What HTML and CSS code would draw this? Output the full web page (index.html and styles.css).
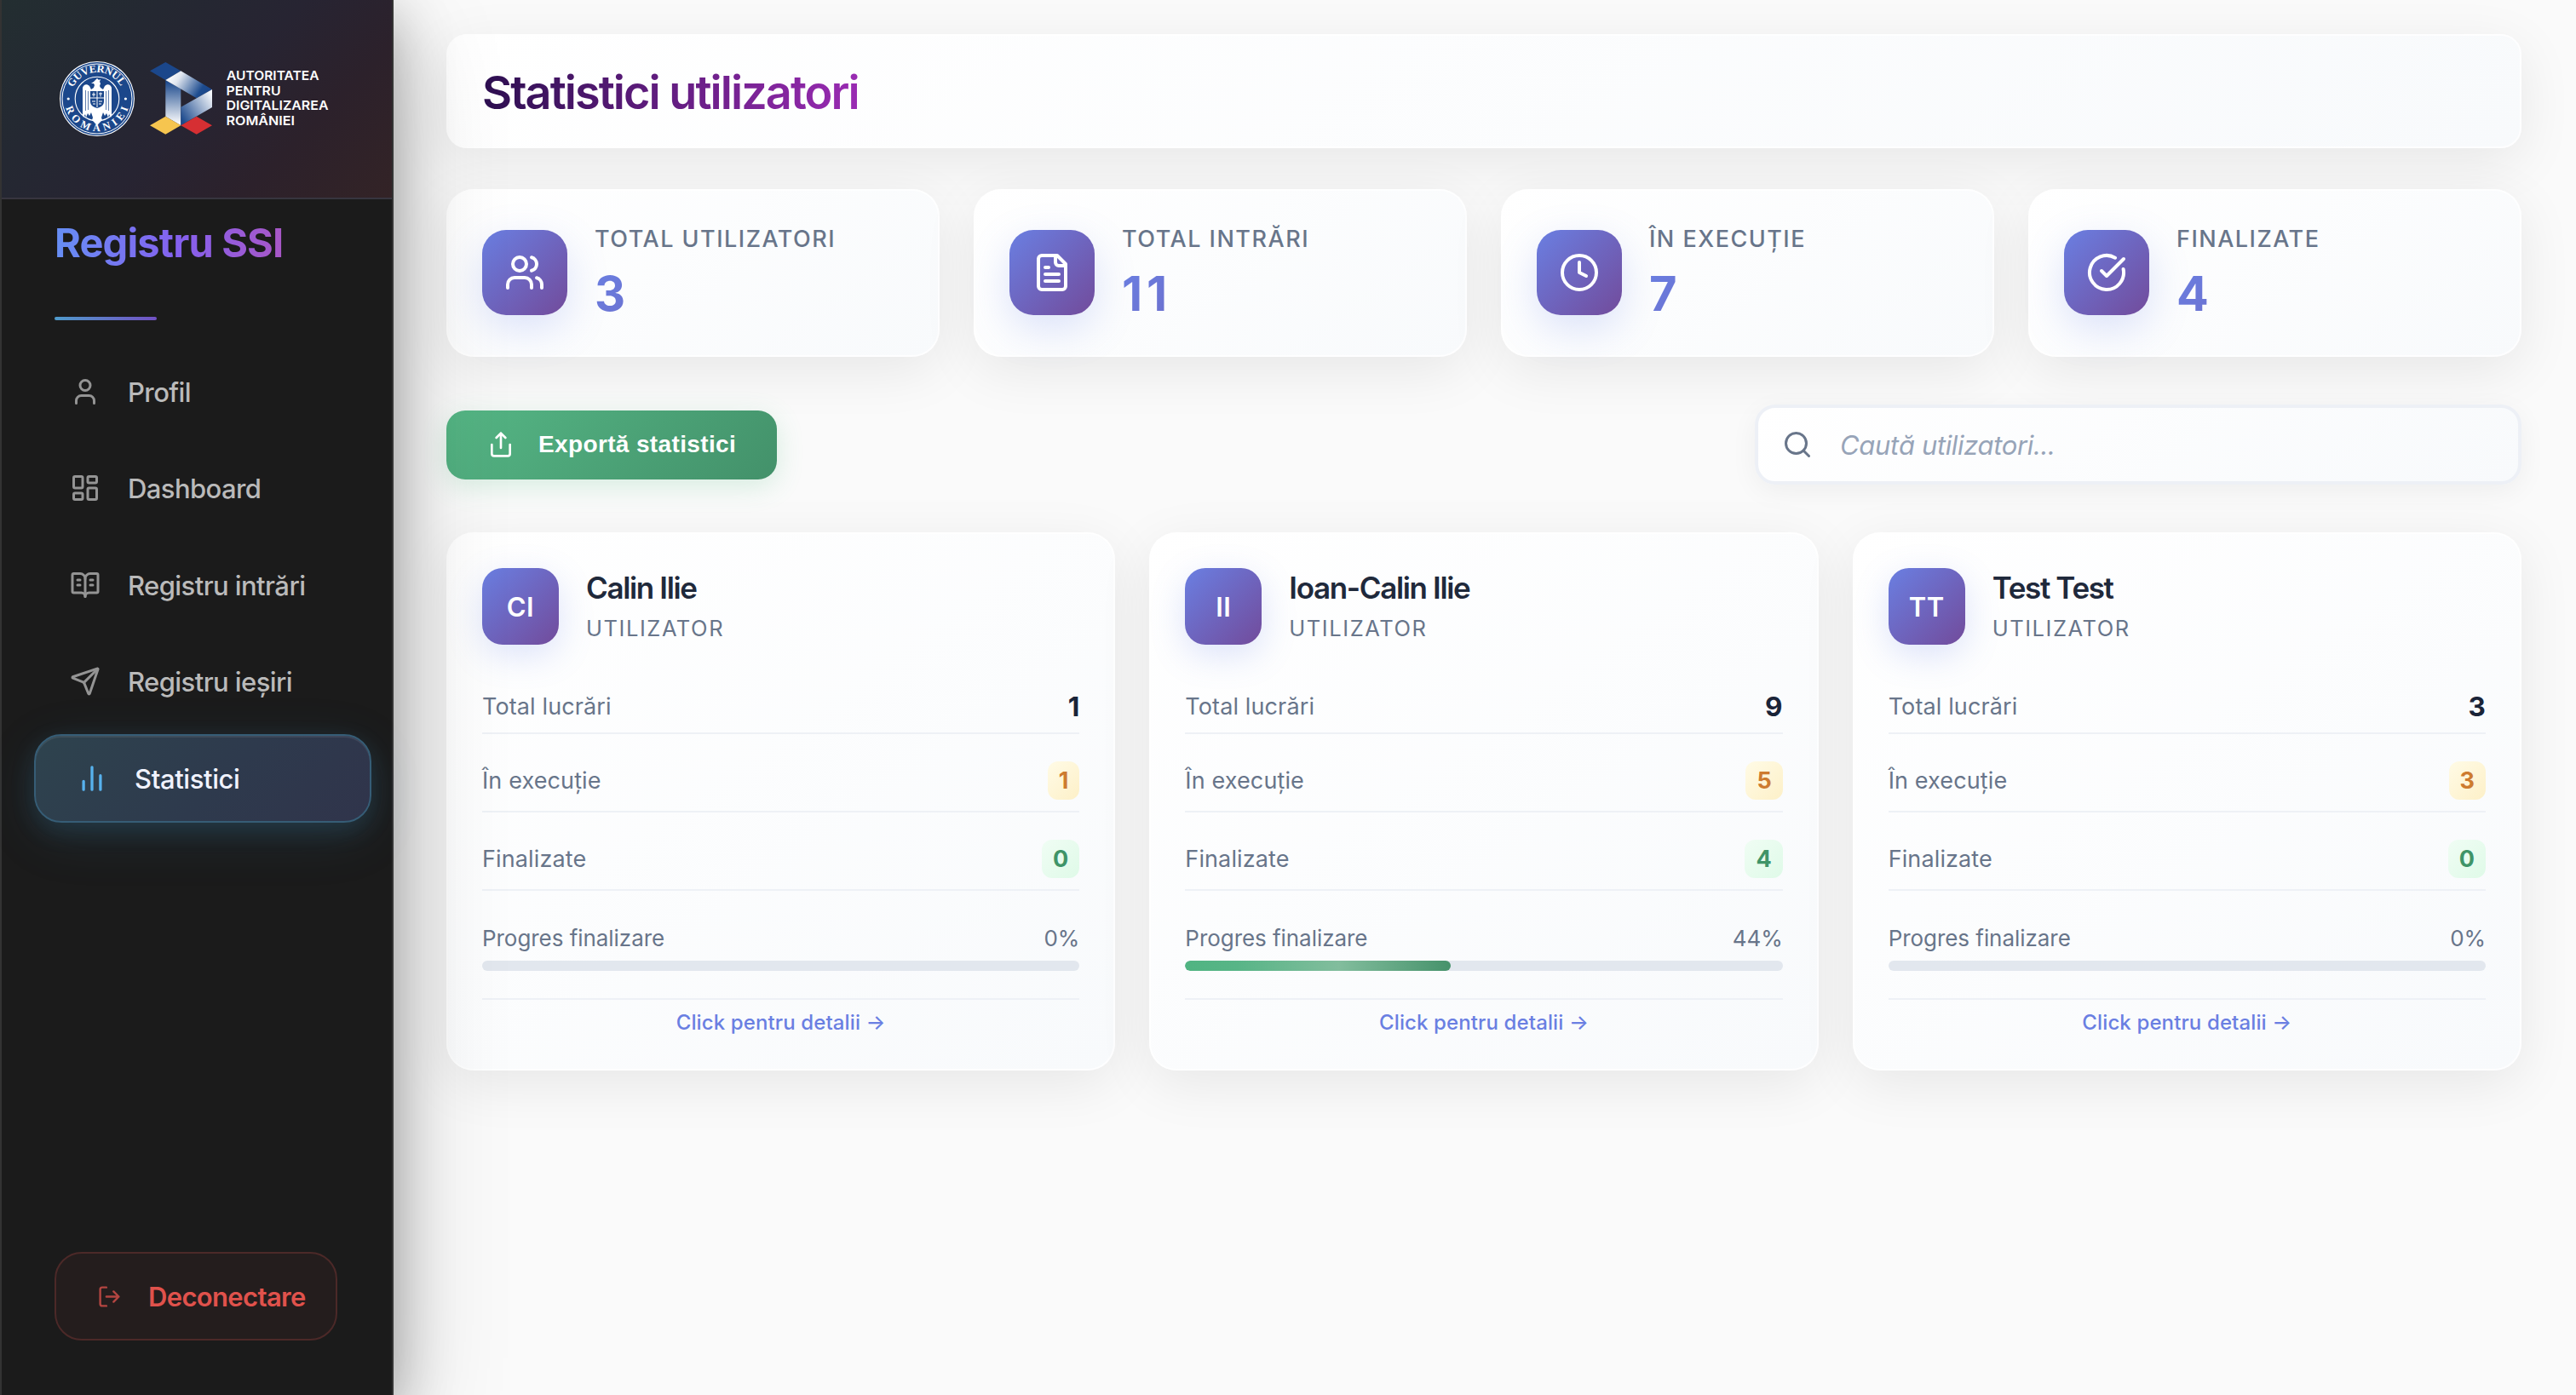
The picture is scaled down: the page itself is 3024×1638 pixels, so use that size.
FILE: index.html
```html
<!DOCTYPE html>
<html lang="ro">
<head>
<meta charset="utf-8">
<title>Statistici utilizatori</title>
<link rel="stylesheet" href="styles.css">
</head>
<body>
<div class="app">
  <aside class="sidebar">
    <div class="brand">
      <svg class="brand-logo" viewBox="64 60 336 112" width="336" height="112">
        <defs>
          <linearGradient id="bandTop" x1="200" y1="86" x2="240" y2="112" gradientUnits="userSpaceOnUse"><stop offset="0" stop-color="#fff"/><stop offset=".25" stop-color="#dfe5ef"/><stop offset=".85" stop-color="#1d4c8f"/><stop offset="1" stop-color="#1b478b"/></linearGradient>
          <linearGradient id="bandLeft" x1="0" y1="96" x2="0" y2="146" gradientUnits="userSpaceOnUse"><stop offset="0" stop-color="#1d4a8d"/><stop offset="1" stop-color="#fff"/></linearGradient>
          <linearGradient id="bandRight" x1="212" y1="138" x2="250" y2="114" gradientUnits="userSpaceOnUse"><stop offset="0" stop-color="#1d4a8d"/><stop offset="1" stop-color="#f4f7fb"/></linearGradient>
          <path id="arcTop" d="M 85.6 103 A 31.3 31.3 0 0 1 142.4 103"/>
          <path id="arcBottom" d="M 77.2 126.5 A 38.3 38.3 0 0 0 150.8 126.5"/>
        </defs>
        <circle cx="114" cy="116" r="44" fill="#fff"/>
        <circle cx="114" cy="116" r="42.9" fill="#1b478b"/>
        <circle cx="114" cy="116" r="41" fill="none" stroke="#fff" stroke-width="1"/>
        <circle cx="114" cy="116" r="25.8" fill="none" stroke="#fff" stroke-width="1.1"/>
        <text class="seal-text"><textPath href="#arcTop" textLength="69">GUVERNUL</textPath></text>
        <text class="seal-text"><textPath href="#arcBottom" textLength="98">ROMÂNIEI</textPath></text>
        <circle cx="80.2" cy="116" r="1.6" fill="#fff"/>
        <circle cx="147.4" cy="116" r="1.6" fill="#fff"/>
        <path fill="#fff" d="M112 94l2-2 2 2 2-1-1 3 1 2-1 3 1 2 3 2 2-4c3-3 7-2 8 2v32l-1 3-2-4-1 4-2-5-2 3-2-4-2 6 1 3-6 6-6-6 1-3-2-6-2 4-2-3-2 5-1-4-2 4-1-3v-32c1-4 5-5 8-2l2 4 3-2 1-3-1-2-3 0 3-2z"/>
        <path fill="#1b478b" d="M106 107h16v12c0 5-4 7-8 8-4-1-8-3-8-8z"/>
        <path stroke="#fff" stroke-width="1" fill="none" d="M114 107v19M106 115h16M108 111h4M110 108.500v5M116 110h4M118 108.500v5M108 119h4M116 119h4M109 122h3M116 122h3"/>
        <path stroke="#1b478b" stroke-width=".7" fill="none" d="M100.500 106v24M103.500 107v22M124.500 107v22M127.500 106v24"/>
        <polygon fill="#1b478b" points="176,83.300 194.300,73 212.300,83.300 194.300,94"/>
        <polygon fill="url(#bandLeft)" points="194.300,94 212.300,104.300 212.300,147.300 194.300,136.700"/>
        <polygon fill="url(#bandTop)" points="194.300,94 212.300,83.300 249,105 230.700,115.300"/>
        <polygon fill="url(#bandRight)" points="249,105 249,126 212.300,147.300 212.300,125.700"/>
        <polygon fill="#f6c54f" points="176,147.300 194.300,136.700 212.300,147.300 194.300,157.700"/>
        <polygon fill="#d62f33" points="212.300,147.300 230.700,136.700 249,147.300 230.700,157.700"/>
        <text class="brand-text" x="266" y="94.200" textLength="108.500" lengthAdjust="spacingAndGlyphs">AUTORITATEA</text>
        <text class="brand-text" x="265.500" y="111.700" textLength="64" lengthAdjust="spacingAndGlyphs">PENTRU</text>
        <text class="brand-text" x="265.500" y="129.400" textLength="120" lengthAdjust="spacingAndGlyphs">DIGITALIZAREA</text>
        <text class="brand-text" x="265.500" y="147" textLength="80.500" lengthAdjust="spacingAndGlyphs">ROMÂNIEI</text>
      </svg>
    </div>
    <h2 class="app-name">Registru SSI</h2>
    <div class="app-rule"></div>
    <nav class="nav">
      <a class="nav-item"><svg class="icon" viewBox="0 0 24 24"><path d="M19 21v-2a4 4 0 0 0-4-4H9a4 4 0 0 0-4 4v2"/><circle cx="12" cy="7" r="4"/></svg><span>Profil</span></a>
      <a class="nav-item"><svg class="icon" viewBox="0 0 24 24"><rect x="3" y="3" width="7" height="9" rx="1"/><rect x="14" y="3" width="7" height="5" rx="1"/><rect x="14" y="12" width="7" height="9" rx="1"/><rect x="3" y="16" width="7" height="5" rx="1"/></svg><span>Dashboard</span></a>
      <a class="nav-item"><svg class="icon" viewBox="0 0 24 24"><path d="M12 7v14M16 12h2M16 8h2M6 12h2M6 8h2"/><path d="M3 18a1 1 0 0 1-1-1V4a1 1 0 0 1 1-1h5a4 4 0 0 1 4 4 4 4 0 0 1 4-4h5a1 1 0 0 1 1 1v13a1 1 0 0 1-1 1h-6a3 3 0 0 0-3 3 3 3 0 0 0-3-3z"/></svg><span>Registru intrări</span></a>
      <a class="nav-item"><svg class="icon" viewBox="0 0 24 24"><path d="M14.536 21.686a.5.5 0 0 0 .937-.024l6.500-19a.496.496 0 0 0-.635-.635l-19 6.500a.5.5 0 0 0-.024.937l7.930 3.180a2 2 0 0 1 1.112 1.110z"/><path d="m21.854 2.147-10.940 10.939"/></svg><span>Registru ieșiri</span></a>
      <a class="nav-item active"><svg class="icon" viewBox="0 0 24 24"><path d="M18 20V10M12 20V4M6 20v-6"/></svg><span>Statistici</span></a>
    </nav>
    <button class="logout"><svg class="icon" viewBox="0 0 24 24"><path d="M9 21H5a2 2 0 0 1-2-2V5a2 2 0 0 1 2-2h4M16 17l5-5-5-5M21 12H9"/></svg><span>Deconectare</span></button>
  </aside>

  <main class="main">
    <header class="card page-head"><h1>Statistici utilizatori</h1></header>

    <section class="stats">
      <div class="card stat">
        <div class="stat-icon"><svg class="icon" viewBox="0 0 24 24"><path d="M16 21v-2a4 4 0 0 0-4-4H6a4 4 0 0 0-4 4v2"/><circle cx="9" cy="7" r="4"/><path d="M22 21v-2a4 4 0 0 0-3-3.870M16 3.130a4 4 0 0 1 0 7.750"/></svg></div>
        <div class="stat-body"><div class="stat-label">TOTAL UTILIZATORI</div><div class="stat-value">3</div></div>
      </div>
      <div class="card stat">
        <div class="stat-icon"><svg class="icon" viewBox="0 0 24 24"><path d="M15 2H6a2 2 0 0 0-2 2v16a2 2 0 0 0 2 2h12a2 2 0 0 0 2-2V7z"/><path d="M14 2v4a2 2 0 0 0 2 2h4M10 9H8M16 13H8M16 17H8"/></svg></div>
        <div class="stat-body"><div class="stat-label">TOTAL INTRĂRI</div><div class="stat-value eleven">11</div></div>
      </div>
      <div class="card stat">
        <div class="stat-icon"><svg class="icon" viewBox="0 0 24 24"><circle cx="12" cy="12" r="10"/><path d="M12 6v6l4 2"/></svg></div>
        <div class="stat-body"><div class="stat-label">ÎN EXECUȚIE</div><div class="stat-value">7</div></div>
      </div>
      <div class="card stat">
        <div class="stat-icon"><svg class="icon" viewBox="0 0 24 24"><path d="M21.801 10A10 10 0 1 1 17 3.335"/><path d="m9 11 3 3L22 4"/></svg></div>
        <div class="stat-body"><div class="stat-label">FINALIZATE</div><div class="stat-value">4</div></div>
      </div>
    </section>

    <section class="toolbar">
      <button class="export"><svg class="icon" viewBox="0 0 24 24"><path d="M4 12v8a2 2 0 0 0 2 2h12a2 2 0 0 0 2-2v-8M16 6l-4-4-4 4M12 2v13"/></svg><span>Exportă statistici</span></button>
      <label class="search"><svg class="icon" viewBox="0 0 24 24"><circle cx="11" cy="11" r="8"/><path d="m21 21-4.350-4.350"/></svg><input type="text" placeholder="Caută utilizatori..."></label>
    </section>

    <section class="users">
      <article class="card user">
        <div class="user-head"><div class="avatar">CI</div><div><div class="user-name">Calin Ilie</div><div class="user-role">UTILIZATOR</div></div></div>
        <div class="row first"><span>Total lucrări</span><strong>1</strong></div>
        <div class="row"><span>În execuție</span><b class="badge busy">1</b></div>
        <div class="row"><span>Finalizate</span><b class="badge done">0</b></div>
        <div class="progress-label"><span>Progres finalizare</span><span>0%</span></div>
        <div class="bar"><div class="fill" style="width:0%"></div></div>
        <div class="more">Click pentru detalii →</div>
      </article>
      <article class="card user">
        <div class="user-head"><div class="avatar">II</div><div><div class="user-name">Ioan-Calin Ilie</div><div class="user-role">UTILIZATOR</div></div></div>
        <div class="row first"><span>Total lucrări</span><strong>9</strong></div>
        <div class="row"><span>În execuție</span><b class="badge busy">5</b></div>
        <div class="row"><span>Finalizate</span><b class="badge done">4</b></div>
        <div class="progress-label"><span>Progres finalizare</span><span>44%</span></div>
        <div class="bar"><div class="fill" style="width:44.44%"></div></div>
        <div class="more">Click pentru detalii →</div>
      </article>
      <article class="card user">
        <div class="user-head"><div class="avatar">TT</div><div><div class="user-name">Test Test</div><div class="user-role">UTILIZATOR</div></div></div>
        <div class="row first"><span>Total lucrări</span><strong>3</strong></div>
        <div class="row"><span>În execuție</span><b class="badge busy">3</b></div>
        <div class="row"><span>Finalizate</span><b class="badge done">0</b></div>
        <div class="progress-label"><span>Progres finalizare</span><span>0%</span></div>
        <div class="bar"><div class="fill" style="width:0%"></div></div>
        <div class="more">Click pentru detalii →</div>
      </article>
    </section>
  </main>
</div>
</body>
</html>
```
FILE: styles.css
```css
* { box-sizing: border-box; }
body { margin: 0; background: #fafafa; font-family: Inter, "Noto Sans", sans-serif; color: #1e293b; }
h1, h2 { margin: 0; }
button { font: inherit; cursor: pointer; }
.icon { fill: none; stroke: currentColor; stroke-width: 2; stroke-linecap: round; stroke-linejoin: round; flex: none; display: block; }
.app { display: flex; height: 1638px; overflow: hidden; }

/* Sidebar */
.sidebar {
  width: 462px; flex: none; display: flex; flex-direction: column; position: relative; z-index: 2;
  background: #1b1b1b; border-left: 2px solid #333; border-right: 2px solid #333;
  box-shadow: 0 40px 128px rgba(0,0,0,.2), 0 20px 64px rgba(0,0,0,.3);
}
.brand {
  height: 234px; flex: none; padding: 60px 0 0 62px; border-bottom: 2px solid #37353f;
  background: linear-gradient(135deg, #232e31 0%, #242832 28%, #272432 52%, #2c212b 74%, #332326 100%);
}
.brand-logo { display: block; }
.seal-text { font: 600 12.5px "Liberation Serif", serif; fill: #fff; }
.brand-text { font: 600 15.2px Inter, sans-serif; fill: #fff; }
.app-name {
  align-self: flex-start; margin: 21px 0 0 62px; font-size: 47px; line-height: 60px; font-weight: 700; letter-spacing: -.85px;
  background: linear-gradient(90deg, #668ff5 0%, #8560ee 55%, #a857c6 100%);
  -webkit-background-clip: text; background-clip: text; color: transparent;
}
.app-rule { width: 120px; height: 4px; margin: 57px 0 32px 62px; border-radius: 2px; background: linear-gradient(90deg, #4f9bcb, #7251c4); flex: none; }
.nav { display: flex; flex-direction: column; gap: 9.4px; }
.nav-item { height: 104px; margin: 0 24px 0 38px; padding-left: 42px; display: flex; align-items: center; gap: 32px; font-size: 31px; font-weight: 500; letter-spacing: -.58px; color: #bababa; }
.nav-item .icon { width: 36px; height: 36px; color: #949494; }
.nav-item span { padding-top: 1px; }
.nav-item.active {
  padding-left: 48px; border: 2px solid #365d76; border-radius: 32px; color: #f1f3ff; letter-spacing: -.4px;
  background: linear-gradient(135deg, #2e434e, #2e3a4d 55%, #30344b);
  box-shadow: 0 16px 64px rgba(60,140,185,.13), 0 10px 28px rgba(60,140,185,.2), inset 0 2px 0 rgba(255,255,255,.08);
}
.nav-item.active .icon { color: #57b2ee; transform: scale(1.1); }
.logout {
  width: 332px; height: 104px; margin: auto 0 64px 62px; padding: 0 0 0 48px; display: flex; align-items: center; gap: 31px;
  background: #241d1d; border: 2px solid #4c2928; border-radius: 32px; color: #e0524c; font-size: 31px; font-weight: 600; letter-spacing: -.65px;
}
.logout .icon { width: 29px; height: 29px; color: #b34541; }

/* Main column */
.main { flex: 1; min-width: 0; padding: 40px 64px 0 62px; }
.card { background: linear-gradient(145deg, #fff 0%, #f8fafc 100%); border: 2px solid rgba(255,255,255,.8); border-radius: 32px; background-origin: border-box; box-shadow: 0 16px 64px rgba(0,0,0,.08); }
.page-head { height: 134px; padding: 3px 0 0 40px; border-radius: 24px; display: flex; align-items: center; }
.page-head h1 {
  font-size: 54px; line-height: 68px; font-weight: 600; letter-spacing: -1.94px; padding-right: 2px;
  background: linear-gradient(90deg, #2d0f50, #9a2bb3);
  -webkit-background-clip: text; background-clip: text; color: transparent;
}
.stats { display: grid; grid-template-columns: repeat(4, 1fr); gap: 40px; margin-top: 48px; }
.stat { height: 197px; padding: 0 40px; display: flex; align-items: center; gap: 32px; }
.stat-icon, .avatar { flex: none; display: flex; align-items: center; justify-content: center; color: #fff; border-radius: 24px; background: linear-gradient(135deg, #6a7fe2, #724b9b); }
.stat-icon { width: 100px; height: 100px; margin-bottom: 1px; border-radius: 28px; box-shadow: 0 16px 48px rgba(102,126,234,.22); }
.stat-icon .icon { width: 48px; height: 48px; }
.stat-body { flex: 1; padding-top: 3px; }
.stat-label { font-size: 27px; line-height: 32px; font-weight: 550; letter-spacing: 1.5px; color: #68758a; }
.stat-value {
  margin-top: 14px; font-size: 56px; line-height: 68px; font-weight: 700;
  background: linear-gradient(135deg, #6a7fe2, #724b9b);
  -webkit-background-clip: text; background-clip: text; color: transparent;
}
.stat-value.eleven { letter-spacing: 4.8px; }

.toolbar { display: flex; align-items: center; justify-content: space-between; margin: 56px 0; height: 94px; }
.export {
  width: 388px; height: 81px; padding: 0 0 0 48px; display: flex; align-items: center; gap: 28px; border: 0; border-radius: 22px; color: #fff;
  background: linear-gradient(135deg, #55b685, #43916a); box-shadow: 0 8px 32px rgba(72,187,120,.2);
  font-family: "Liberation Sans", Arial, sans-serif; font-size: 28px; font-weight: 700; letter-spacing: .36px;
}
.export .icon { width: 32px; height: 32px; }
.search { width: 900px; height: 94px; padding-left: 28px; display: flex; align-items: center; gap: 32px; border: 4px solid #edf0f6; border-radius: 24px; background: linear-gradient(145deg, #fff, #f8fafc); box-shadow: 0 8px 32px rgba(0,0,0,.05); }
.search .icon { width: 36px; height: 36px; color: #68758a; }
.search input { flex: 1; border: 0; padding: 0; outline: 0; background: none; font: italic 400 31px Inter, sans-serif; letter-spacing: -.36px; }
.search input::placeholder { color: #97a4b8; opacity: 1; }

.users { display: grid; grid-template-columns: repeat(3, 1fr); gap: 40px; }
.user { padding: 40px; height: 632px; }
.user-head { display: flex; align-items: center; gap: 32px; height: 90px; margin-bottom: 40px; }
.avatar { width: 90px; height: 90px; font-size: 31px; font-weight: 600; letter-spacing: .5px; box-shadow: 0 12px 40px rgba(102,126,234,.22); }
.user-name { font-size: 35px; line-height: 44px; font-weight: 600; letter-spacing: -1.35px; color: #1f293b; }
.user-role { margin: 10px 0 3px; font-size: 25.5px; line-height: 32px; letter-spacing: 1.55px; color: #68758a; }
.row { height: 92px; padding-top: 19px; display: flex; align-items: center; justify-content: space-between; border-bottom: 2px solid #eef1f6; font-size: 27px; letter-spacing: .12px; color: #68758a; }
.row.first { height: 65px; padding-top: 1px; }
.row strong { font-size: 31.5px; font-weight: 700; color: #1a2438; }
.badge { height: 45px; line-height: 45px; padding: 0 13px; border-radius: 12px; font-weight: 700; letter-spacing: 0; }
.busy { color: #cd7b2f; background: linear-gradient(135deg, #fffbe6, #fdf0c8); }
.done { color: #3f9468; background: linear-gradient(135deg, #f0fdf4, #dffae8); }
.progress-label { display: flex; justify-content: space-between; margin-top: 40px; font-size: 26px; line-height: 32px; letter-spacing: -.05px; color: #68758a; }
.bar { height: 12px; margin-top: 10px; border-radius: 6px; background: #e2e7ee; overflow: hidden; }
.fill { height: 100%; border-radius: 6px; background: linear-gradient(90deg, #50b482 0%, #58b587 20%, #82bd9d 58%, #46926b 100%); }
.more { margin-top: 32px; padding-top: 12px; border-top: 2px solid #eef1f6; text-align: center; font-size: 24px; line-height: 29px; font-weight: 500; letter-spacing: .12px; color: #6a7fe2; }
```
